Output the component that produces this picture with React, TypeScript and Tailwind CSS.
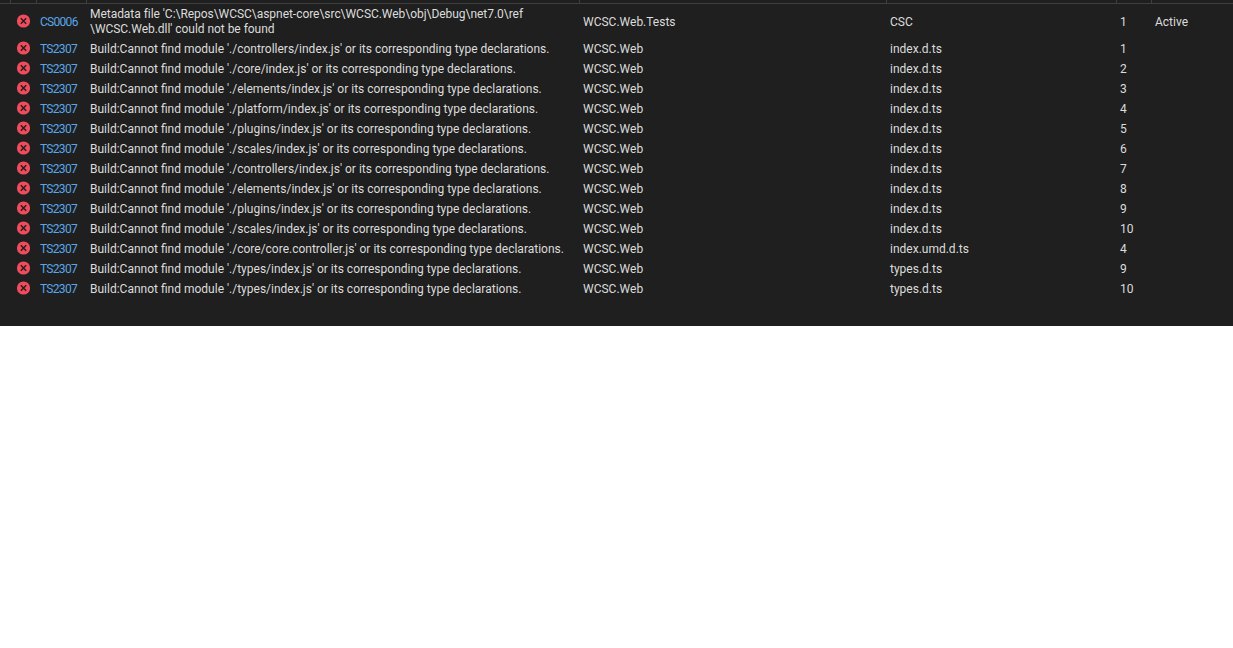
const rows = [
  ["./controllers/index.js", "index.d.ts", "1"],
  ["./core/index.js", "index.d.ts", "2"],
  ["./elements/index.js", "index.d.ts", "3"],
  ["./platform/index.js", "index.d.ts", "4"],
  ["./plugins/index.js", "index.d.ts", "5"],
  ["./scales/index.js", "index.d.ts", "6"],
  ["./controllers/index.js", "index.d.ts", "7"],
  ["./elements/index.js", "index.d.ts", "8"],
  ["./plugins/index.js", "index.d.ts", "9"],
  ["./scales/index.js", "index.d.ts", "10"],
  ["./core/core.controller.js", "index.umd.d.ts", "4"],
  ["./types/index.js", "types.d.ts", "9"],
  ["./types/index.js", "types.d.ts", "10"],
];

const ErrorIcon = () => (
  <svg width="15" height="14" viewBox="0 0 15 14" className="shrink-0">
    <circle cx="7.5" cy="7" r="6.6" fill="#f14c5c" />
    <path d="M4.8 4.3L10.2 9.7M10.2 4.3L4.8 9.7" stroke="#1f1f1f" strokeWidth="1.4" />
  </svg>
);

const Row = ({
  code,
  description,
  project,
  file,
  line,
  state,
  tall,
}: {
  code: string;
  description: React.ReactNode;
  project: string;
  file: string;
  line: string;
  state?: string;
  tall?: boolean;
}) => (
  <div className={tall ? "flex h-[35px] items-center pt-px" : "flex h-5 items-center"}>
    <div className={tall ? "mb-[3px] flex w-[40px] shrink-0 pl-[16px]" : "mb-[2px] flex w-[40px] shrink-0 pl-[16px]"}>
      <ErrorIcon />
    </div>
    <div className="w-[50px] shrink-0 tracking-[-0.7px] text-[#5aa6e8]">{code}</div>
    <div className="w-[493px] shrink-0">{description}</div>
    <div className="w-[307px] shrink-0">{project}</div>
    <div className="w-[230px] shrink-0">{file}</div>
    <div className="w-[35px] shrink-0">{line}</div>
    <div>{state}</div>
  </div>
);

export default function App() {
  return (
    <div className="h-[326px] bg-[#1f1f1f] font-['Roboto',sans-serif] text-[12px] leading-[15px] text-[#dcdcdc]">
      <div className="flex h-[4px] border-b border-[#3f3f3f]">
        <div className="w-[11px] border-r border-[#3f3f3f]" />
        <div className="w-[26px] border-r border-[#3f3f3f]" />
        <div className="w-[50px] border-r border-[#3f3f3f]" />
        <div className="w-[493px] border-r border-[#3f3f3f]" />
        <div className="w-[307px] border-r border-[#3f3f3f]" />
        <div className="w-[230px] border-r border-[#3f3f3f]" />
        <div className="w-[35px] border-r border-[#3f3f3f]" />
      </div>
      <Row
        tall
        code="CS0006"
        description={
          <span className="tracking-[-0.04px]">
            Metadata file 'C:\Repos\WCSC\aspnet-core\src\WCSC.Web\obj\Debug\net7.0\ref
            <br />
            \WCSC.Web.dll' could not be found
          </span>
        }
        project="WCSC.Web.Tests"
        file="CSC"
        line="1"
        state="Active"
      />
      {rows.map((r, i) => (
        <Row
          key={i}
          code="TS2307"
          description={`Build:Cannot find module '${r[0]}' or its corresponding type declarations.`}
          project="WCSC.Web"
          file={r[1]}
          line={r[2]}
        />
      ))}
    </div>
  );
}
